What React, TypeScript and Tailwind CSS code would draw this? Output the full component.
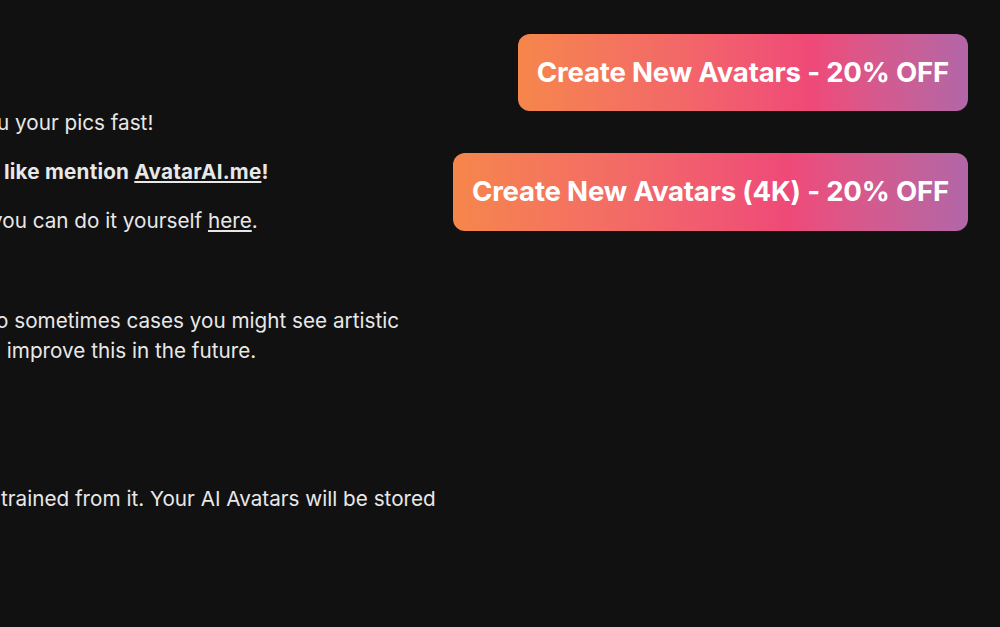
export default function App() {
  return (
    <div
      className="min-h-[627px] w-full bg-[#111111] text-[#e8e8e8] overflow-hidden flex justify-between"
      style={{ fontFamily: 'Inter, "Noto Sans", sans-serif' }}
    >
      <div className="pt-[108px] text-[20.7px] leading-[30px] whitespace-nowrap overflow-hidden">
        <p className="-ml-[3px]">u your pics fast!</p>
        <p className="mt-[19px] ml-[4px] font-bold tracking-[0.2px]">
          like mention <a className="underline underline-offset-2">AvatarAI.me</a>!
        </p>
        <p className="mt-[19px] -ml-[9px]">
          you can do it yourself <a className="underline underline-offset-2">here</a>.
        </p>
        <p className="mt-[70px] -ml-[4px]">o sometimes cases you might see artistic</p>
        <p className="ml-[1px]">&nbsp;improve this in the future.</p>
        <p className="mt-[118px] ml-[1px]">trained from it. Your AI Avatars will be stored</p>
      </div>

      <div className="flex flex-col items-end gap-[42px] pt-[34px] pr-[32px]">
        <button className="h-[77px] px-[19px] rounded-xl bg-gradient-to-r from-[#f6864b] via-[#ef4978] via-65% to-[#b266a7] text-white text-[27.6px] font-bold tracking-[-0.2px]">
          Create New Avatars - 20% OFF
        </button>
        <button className="h-[78px] px-[19px] rounded-xl bg-gradient-to-r from-[#f6864b] via-[#ef4978] via-65% to-[#b266a7] text-white text-[27.6px] font-bold tracking-[-0.2px]">
          Create New Avatars (4K) - 20% OFF
        </button>
      </div>
    </div>
  );
}
